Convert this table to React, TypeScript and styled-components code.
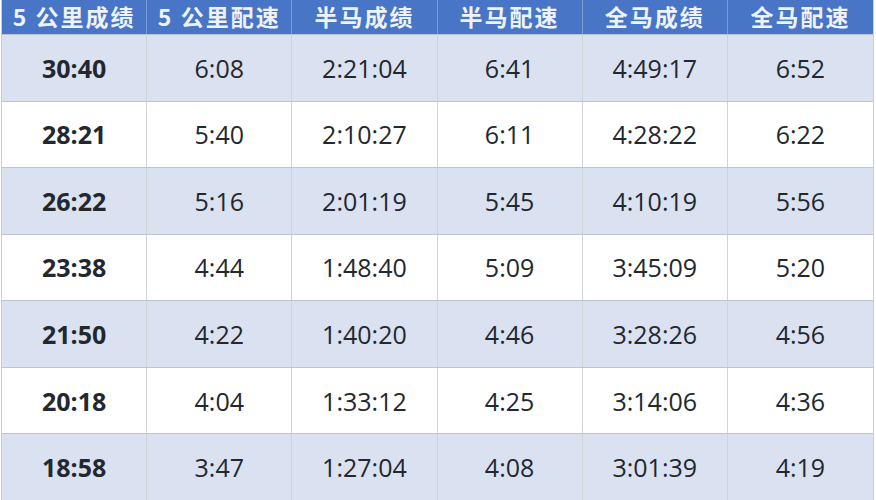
import React from 'react'
import styled, { createGlobalStyle } from 'styled-components'

const GlobalStyle = createGlobalStyle`
  html, body {
    margin: 0;
    padding: 0;
    background: #ffffff;
  }
  body {
    font-family: "Open Sans", "Noto Sans CJK SC", sans-serif;
  }
`

const headers = ['5 公里成绩', '5 公里配速', '半马成绩', '半马配速', '全马成绩', '全马配速']

const rows = [
  ['30:40', '6:08', '2:21:04', '6:41', '4:49:17', '6:52'],
  ['28:21', '5:40', '2:10:27', '6:11', '4:28:22', '6:22'],
  ['26:22', '5:16', '2:01:19', '5:45', '4:10:19', '5:56'],
  ['23:38', '4:44', '1:48:40', '5:09', '3:45:09', '5:20'],
  ['21:50', '4:22', '1:40:20', '4:46', '3:28:26', '4:56'],
  ['20:18', '4:04', '1:33:12', '4:25', '3:14:06', '4:36'],
  ['18:58', '3:47', '1:27:04', '4:08', '3:01:39', '4:19']
]

export default function App() {
  return (
    <>
      <GlobalStyle />
      <Page>
        <Table>
          <HeaderRow>
            {headers.map((h, i) => (
              <HeaderCell key={h} $last={i === headers.length - 1}>{h}</HeaderCell>
            ))}
          </HeaderRow>
          {rows.map((row, r) => (
            <Row key={row[0]} $alt={r % 2 === 0}>
              {row.map((value, c) => (
                <Cell key={c} $bold={c === 0} $last={c === row.length - 1}>{value}</Cell>
              ))}
            </Row>
          ))}
        </Table>
      </Page>
    </>
  )
}

const Page = styled.div`
  width: 876px;
  height: 500px;
  overflow: hidden;
  padding-left: 1px;
  box-sizing: border-box;
`

const Table = styled.div`
  width: 873px;
  height: 500px;
  display: grid;
  grid-template-rows: 34px repeat(7, 1fr);
  border-left: 1px solid #c9ced8;
  border-right: 1px solid #c9ced8;
  box-sizing: border-box;
`

const HeaderRow = styled.div`
  display: grid;
  grid-template-columns: repeat(6, 1fr);
  background: #4875c5;
`

const HeaderCell = styled.div<{ $last?: boolean }>`
  display: flex;
  align-items: center;
  justify-content: center;
  color: #eef3fb;
  font-family: "Noto Sans CJK SC", "Open Sans", sans-serif;
  font-weight: 700;
  font-size: 23px;
  letter-spacing: 2px;
  line-height: 1;
  padding-bottom: 2px;
  border-right: ${p => (p.$last ? 'none' : '1px solid #7d9bd3')};
`

const Row = styled.div<{ $alt?: boolean }>`
  display: grid;
  grid-template-columns: repeat(6, 1fr);
  background: ${p => (p.$alt ? '#dae1f0' : '#ffffff')};
  border-top: 1px solid #bcc4d0;
`

const Cell = styled.div<{ $bold?: boolean; $last?: boolean }>`
  display: flex;
  align-items: center;
  justify-content: center;
  color: #23272e;
  font-family: "Open Sans", sans-serif;
  font-size: 25px;
  font-weight: ${p => (p.$bold ? 700 : 400)};
  border-right: ${p => (p.$last ? 'none' : '1px solid #cfd3da')};
`
